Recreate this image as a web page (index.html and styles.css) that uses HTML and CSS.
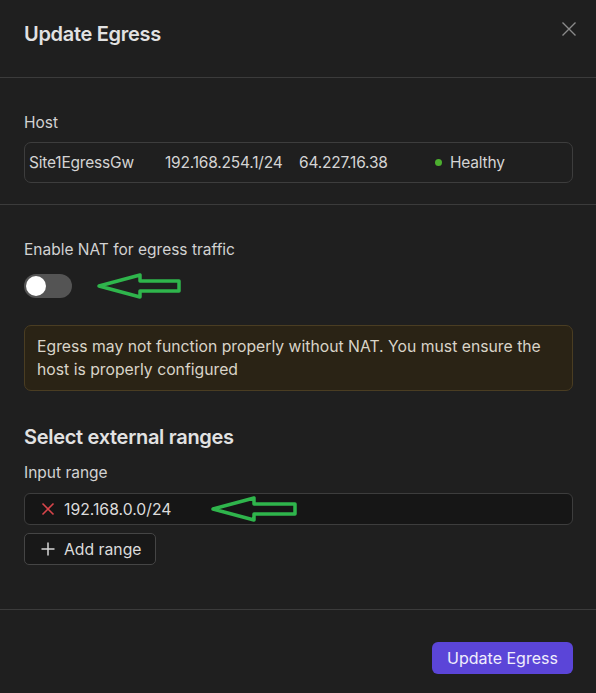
FILE: index.html
```html
<!DOCTYPE html>
<html>
<head>
<meta charset="utf-8">
<link rel="stylesheet" href="styles.css">
</head>
<body>
<div class="modal">
  <header class="modal-header">
    <h1 class="title">Update Egress</h1>
    <button class="close" aria-label="Close">
      <svg width="16" height="16" viewBox="0 0 16 16"><path d="M1.5 1.5 L14.5 14.5 M14.5 1.5 L1.5 14.5" stroke="#8a8a8a" stroke-width="1.4" fill="none"/></svg>
    </button>
  </header>

  <section class="section host-section">
    <div class="label">Host</div>
    <div class="host-box">
      <span class="host-name">Site1EgressGw</span>
      <span class="host-ip">192.168.254.1/24</span>
      <span class="host-pub">64.227.16.38</span>
      <span class="status"><span class="dot"></span>Healthy</span>
    </div>
  </section>

  <section class="section nat-section">
    <div class="label">Enable NAT for egress traffic</div>
    <div class="toggle-row">
      <span class="toggle"><span class="knob"></span></span>
      <svg class="arrow arrow-1" width="88" height="28" viewBox="0 0 88 28"><path d="M3 14 L44 3 L44 9 L83 9 L83 19 L44 19 L44 25 Z" fill="none" stroke="#2fb54c" stroke-width="3.5" stroke-linejoin="round"/></svg>
    </div>
    <div class="warning">Egress may not function properly without NAT. You must ensure the host is properly configured</div>

    <h2 class="subtitle">Select external ranges</h2>
    <div class="label small-gap">Input range</div>
    <div class="range-input">
      <svg class="x-icon" width="14" height="14" viewBox="0 0 14 14"><path d="M1.5 1.5 L12.5 12.5 M12.5 1.5 L1.5 12.5" stroke="#d8454a" stroke-width="1.6" fill="none"/></svg>
      <span>192.168.0.0/24</span>
      <svg class="arrow arrow-2" width="90" height="28" viewBox="0 0 90 28"><path d="M3 14 L44 3 L44 9 L85 9 L85 19 L44 19 L44 25 Z" fill="none" stroke="#2fb54c" stroke-width="3.5" stroke-linejoin="round"/></svg>
    </div>
    <button class="add-btn">
      <svg width="14" height="14" viewBox="0 0 14 14"><path d="M7 0.5 V13.5 M0.5 7 H13.5" stroke="#d6d6d6" stroke-width="1.5" fill="none"/></svg>
      <span>Add range</span>
    </button>
  </section>

  <footer class="modal-footer">
    <button class="primary">Update Egress</button>
  </footer>
</div>
</body>
</html>
```
FILE: styles.css
```css
* { box-sizing: border-box; }
html, body { margin: 0; padding: 0; background: #1f1f1f; }
body {
  font-family: Inter, "Noto Sans", sans-serif;
  color: #d6d6d6;
  width: 596px;
  height: 693px;
  overflow: hidden;
}
.modal {
  width: 596px;
  height: 693px;
  background: #1f1f1f;
  display: flex;
  flex-direction: column;
}
.modal-header {
  height: 78px;
  border-bottom: 1px solid #3b3b3b;
  display: flex;
  justify-content: space-between;
  align-items: flex-start;
  padding: 20px 19px 0 24px;
}
.title {
  margin: 0;
  font-size: 20px;
  line-height: 28px;
  font-weight: 600;
  color: #e2e2e2;
  letter-spacing: -0.3px;
}
.close {
  background: none;
  border: none;
  padding: 0;
  margin-top: 1px;
  width: 16px;
  height: 16px;
  cursor: pointer;
}
.close svg { display: block; }
.section {
  padding: 0 23px 0 24px;
  display: flex;
  flex-direction: column;
}
.label {
  font-size: 15.5px;
  line-height: 20px;
  color: #d2d2d2;
}
.host-section {
  padding-top: 35px;
  height: 127px;
  border-bottom: 1px solid #3b3b3b;
}
.host-box {
  margin-top: 9px;
  height: 41px;
  border: 1px solid #3d3d3d;
  border-radius: 7px;
  display: flex;
  align-items: center;
  padding-left: 4px;
  font-size: 15.5px;
  color: #d4d4d4;
  letter-spacing: -0.2px;
}
.host-name { width: 136px; }
.host-ip { width: 134px; }
.host-pub { width: 136px; }
.status { display: flex; align-items: center; }
.dot {
  width: 7px; height: 7px; border-radius: 50%;
  background: #4caf2f;
  margin-right: 8px;
}
.nat-section { padding-top: 35px; flex: 1; border-bottom: 1px solid #3b3b3b; }
.toggle-row {
  margin-top: 14px;
  height: 24px;
  position: relative;
}
.toggle {
  display: block;
  width: 48px;
  height: 24px;
  border-radius: 12px;
  background: #545454;
  position: relative;
}
.knob {
  position: absolute;
  left: 2px; top: 2px;
  width: 20px; height: 20px;
  border-radius: 50%;
  background: #fff;
}
.arrow { position: absolute; }
.arrow-1 { left: 72px; top: -2px; }
.warning {
  margin-top: 27px;
  background: #2a2315;
  border: 1px solid #4a3d22;
  border-radius: 7px;
  padding: 9px 12px;
  font-size: 15.75px;
  line-height: 23px;
  color: #d9d4c8;
}
.subtitle {
  margin: 32px 0 0;
  font-size: 20px;
  line-height: 28px;
  font-weight: 600;
  color: #e2e2e2;
  letter-spacing: -0.3px;
}
.small-gap { margin-top: 12px; }
.range-input {
  position: relative;
  margin-top: 10px;
  height: 32px;
  background: #161616;
  border: 1px solid #3d3d3d;
  border-radius: 6px;
  display: flex;
  align-items: center;
  padding-left: 16px;
  font-size: 15.75px;
  color: #dcdcdc;
}
.x-icon { margin-right: 9px; }
.arrow-2 { left: 185px; top: 1px; }
.add-btn {
  margin-top: 8px;
  align-self: flex-start;
  width: 132px;
  height: 32px;
  background: #181818;
  border: 1px solid #454545;
  border-radius: 5px;
  display: flex;
  align-items: center;
  padding: 0 0 0 16px;
  font-family: inherit;
  font-size: 15.75px;
  color: #dcdcdc;
}
.add-btn svg { margin-right: 9px; }
.modal-footer {
  height: 83px;
  display: flex;
  justify-content: flex-end;
  align-items: flex-start;
  padding: 32px 23px 0 0;
}
.primary {
  width: 141px;
  height: 32px;
  background: #5b45d8;
  border: none;
  border-radius: 6px;
  color: #f0eefc;
  font-family: inherit;
  font-size: 16px;
  cursor: pointer;
}
```
